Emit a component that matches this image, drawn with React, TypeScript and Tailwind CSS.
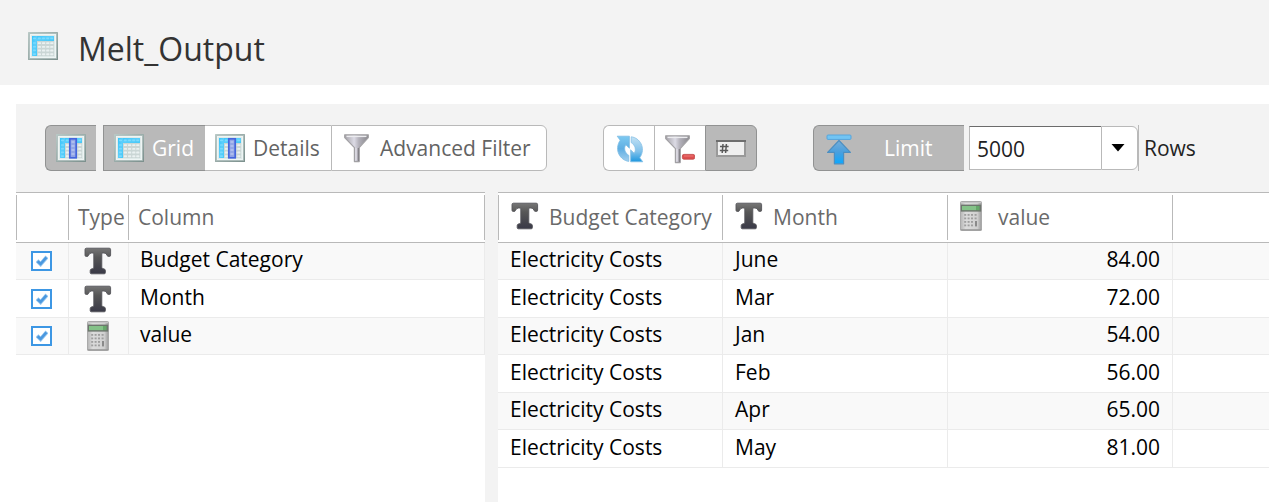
import React, { useId } from "react";

function TableIcon({ column = false }: { column?: boolean }) {
  const id = useId();
  return (
    <svg width="30" height="28" viewBox="0 0 30 28" className="shrink-0" aria-hidden="true">
      <defs>
        <linearGradient id={id + "f"} x1="0" y1="0" x2="1" y2="1">
          <stop offset="0" stopColor="#b9c9c6" />
          <stop offset="1" stopColor="#7b8f8c" />
        </linearGradient>
        <linearGradient id={id + "b"} x1="0" y1="0" x2="1" y2="1">
          <stop offset="0" stopColor="#35c3fb" />
          <stop offset="0.5" stopColor="#5ccffb" />
          <stop offset="1" stopColor="#45c8f8" />
        </linearGradient>
      </defs>
      <rect width="30" height="28" rx="0.5" fill={`url(#${id}f)`} />
      <rect x="1.2" y="1.2" width="27.6" height="25.6" fill="#b4c3c1" />
      <rect x="2" y="2" width="26" height="24" fill="#eef5f4" />
      <rect x="3" y="3" width="24" height="22" fill="#dfeae9" />
      <rect x="4" y="4" width="22" height="20" fill="#cad6d5" />
      <rect x="4" y="4" width="22" height="5" fill={`url(#${id}b)`} />
      <rect x="4" y="4" width="5" height="20" fill={`url(#${id}b)`} />
      {[10.2, 13.9, 17.6, 21.3].map((y) =>
        [9.8, 14, 18.2, 22.2].map((x) => (
          <rect key={`${x}-${y}`} x={x} y={y} width="3.2" height="1.9" rx="0.6" fill="#eaf1f1" />
        )),
      )}
      {[10.2, 13.9, 17.6, 21.3].map((y) => (
        <rect key={y} x="5" y={y} width="3" height="1.6" rx="0.6" fill="#7cdafd" />
      ))}
      {[5, 9.8, 14, 18.2, 22.2].map((x) => (
        <rect key={x} x={x} y="5.6" width="3" height="1.6" rx="0.6" fill="#7cdafd" />
      ))}
      {column && (
        <g>
          <rect x="13.8" y="4.8" width="6.4" height="19" fill="#93a6e6" stroke="#4465dd" strokeWidth="1.7" />
          {[7, 11, 15, 19].map((y) => (
            <rect key={y} x="15.5" y={y} width="3" height="2" fill="#aebdee" />
          ))}
        </g>
      )}
    </svg>
  );
}

function FunnelIcon({ minus = false }: { minus?: boolean }) {
  const id = useId();
  return (
    <svg width="30" height="30" viewBox="0 0 30 30" className="shrink-0" aria-hidden="true">
      <defs>
        <linearGradient id={id} x1="0" x2="1">
          <stop offset="0" stopColor="#a3a1a6" />
          <stop offset="0.4" stopColor="#dcdbe5" />
          <stop offset="0.6" stopColor="#b3b1ba" />
          <stop offset="1" stopColor="#89888d" />
        </linearGradient>
      </defs>
      <path
        d="M0.7 1.8H24.3V4.6L15.2 14.6V28.6H10.4V14.6L0.7 4.6Z"
        fill={`url(#${id})`}
        stroke="#a2a1a4"
        strokeWidth="1.2"
        strokeLinejoin="round"
      />
      <path d="M2.5 3.4H22.5" stroke="#ececef" strokeWidth="1.4" />
      <path d="M14.4 15V28" stroke="#858389" strokeWidth="1.4" />
      <path d="M12 15V27" stroke="#dddce4" strokeWidth="1.3" />
      {minus && (
        <g>
          <rect x="17.4" y="20.4" width="12.2" height="4.8" rx="1.4" fill="#dd4f4f" stroke="#c04444" strokeWidth="0.8" />
          <path d="M19 22H28.4" stroke="#ee7777" />
        </g>
      )}
    </svg>
  );
}

function RefreshIcon() {
  const id = useId();
  return (
    <svg width="28" height="28" viewBox="0 0 28 28" className="shrink-0" aria-hidden="true">
      <defs>
        <linearGradient id={id + "a"} x1="0" y1="0" x2="0" y2="1">
          <stop offset="0" stopColor="#7cc9f1" />
          <stop offset="0.5" stopColor="#5faee2" />
          <stop offset="1" stopColor="#a4d0ef" />
        </linearGradient>
        <linearGradient id={id + "b"} x1="0" y1="0" x2="0" y2="1">
          <stop offset="0" stopColor="#c3e2f4" />
          <stop offset="0.6" stopColor="#7fc0ea" />
          <stop offset="1" stopColor="#1d97df" />
        </linearGradient>
      </defs>
      <path
        d="M1.2 1.2H13.4V13.2L9.8 9.8C7.6 13 8.6 17.8 12.8 20.4V26.4C4.4 25.4 -2.4 15 4.2 5.2Z"
        fill={`url(#${id}a)`}
        stroke="#7dbce5"
        strokeWidth="0.8"
      />
      <path
        d="M26.8 26.8H14.6V14.8L18.2 18.2C20.4 15 19.4 10.2 15.2 7.6V1.8C23.6 2.6 30.4 13 23.8 22.8Z"
        fill={`url(#${id}b)`}
        stroke="#86c0e6"
        strokeWidth="0.8"
      />
    </svg>
  );
}

function NumberFieldIcon() {
  return (
    <svg width="30" height="17" viewBox="0 0 30 17" className="shrink-0" aria-hidden="true">
      <rect x="1" y="1" width="28" height="15" fill="#efefef" stroke="#999" strokeWidth="2" />
      <path d="M0 1H30" stroke="#6e6e6e" strokeWidth="2" />
      <path d="M7 4L6.2 13M10.4 4L9.6 13M4 6.6H12.6M3.8 10.4H12.2" stroke="#5a5a5a" strokeWidth="1.5" />
    </svg>
  );
}

function LimitIcon() {
  const id = useId();
  return (
    <svg width="26" height="31" viewBox="0 0 26 31" className="shrink-0" aria-hidden="true">
      <defs>
        <linearGradient id={id} x1="0" y1="0" x2="0" y2="1">
          <stop offset="0" stopColor="#76aed9" />
          <stop offset="0.5" stopColor="#4a9fdd" />
          <stop offset="1" stopColor="#0aa8ff" />
        </linearGradient>
      </defs>
      <rect x="1" y="1" width="24" height="4.4" rx="1" fill="#72c4f3" stroke="#56a5dc" />
      <path
        d="M13 6.5L24.4 18.4H17.6V29.8H8.4V18.4H1.6Z"
        fill={`url(#${id})`}
        stroke="#4d8fc1"
        strokeWidth="1.2"
        strokeLinejoin="round"
      />
    </svg>
  );
}

function TextTypeIcon() {
  const id = useId();
  return (
    <svg width="28" height="28" viewBox="0 0 28 28" className="shrink-0" role="img" aria-label="Text">
      <defs>
        <linearGradient id={id} x1="0" y1="0" x2="0" y2="1">
          <stop offset="0" stopColor="#767676" />
          <stop offset="0.35" stopColor="#575757" />
          <stop offset="0.75" stopColor="#44444c" />
          <stop offset="1" stopColor="#3a3a48" />
        </linearGradient>
      </defs>
      <path
        d="M2.4 1.2H25.2Q26.6 1.2 26.6 2.6V8.2Q26.6 9.4 25.4 9.4H24.4Q23.4 9.4 23.1 8.4Q22.3 6 20 6H18.6Q17.8 6 17.8 7V20.2Q17.8 21.4 18.8 21.6L20.2 22Q21.4 22.4 21.4 23.6V25.6Q21.4 26.8 20.2 26.8H7.4Q6.2 26.8 6.2 25.6V23.6Q6.2 22.4 7.4 22L8.8 21.6Q9.8 21.4 9.8 20.2V7Q9.8 6 9 6H7.6Q5.3 6 4.5 8.4Q4.2 9.4 3.2 9.4H2.2Q1 9.4 1 8.2V2.6Q1 1.2 2.4 1.2Z"
        fill={`url(#${id})`}
        stroke="#55555a"
        strokeWidth="0.9"
      />
    </svg>
  );
}

function NumberTypeIcon() {
  const id = useId();
  return (
    <svg width="22" height="30" viewBox="0 0 22 30" className="shrink-0" role="img" aria-label="Number">
      <defs>
        <linearGradient id={id} x1="0" x2="1">
          <stop offset="0" stopColor="#b5b5b5" />
          <stop offset="0.25" stopColor="#dcdcdc" />
          <stop offset="0.8" stopColor="#d0d0d0" />
          <stop offset="1" stopColor="#9b9b9b" />
        </linearGradient>
      </defs>
      <rect x="0.5" y="0.5" width="21" height="29" rx="1" fill={`url(#${id})`} stroke="#aaa" />
      <path d="M1 1.5H21" stroke="#c6c6c6" />
      <rect x="0.8" y="3.6" width="20.4" height="7" fill="#6d766d" />
      <rect x="2" y="5" width="14" height="4.2" fill="#84c288" />
      <rect x="16" y="5" width="3.6" height="4.2" fill="#65a86a" />
      {[13, 16.5, 20, 23.5].map((y) =>
        [4.2, 7.6, 11].map((x) => <rect key={`${x}-${y}`} x={x} y={y} width="2" height="1.8" fill="#9e9e9e" />),
      )}
      <rect x="14.6" y="13" width="2" height="1.8" fill="#9e9e9e" />
      <rect x="14.6" y="16.5" width="2" height="1.8" fill="#9e9e9e" />
      <rect x="15" y="20" width="2" height="5.4" fill="#8a8a8a" />
      <path d="M0.5 28.8H21.5" stroke="#999" strokeWidth="1.2" />
    </svg>
  );
}

type Kind = "text" | "number";

const columns: { name: string; kind: Kind }[] = [
  { name: "Budget Category", kind: "text" },
  { name: "Month", kind: "text" },
  { name: "value", kind: "number" },
];

const records = [
  ["Electricity Costs", "June", "84.00"],
  ["Electricity Costs", "Mar", "72.00"],
  ["Electricity Costs", "Jan", "54.00"],
  ["Electricity Costs", "Feb", "56.00"],
  ["Electricity Costs", "Apr", "65.00"],
  ["Electricity Costs", "May", "81.00"],
];

function TypeIcon({ kind }: { kind: Kind }) {
  return kind === "text" ? <TextTypeIcon /> : <NumberTypeIcon />;
}

function HeaderCell({ children, className = "" }: { children?: React.ReactNode; className?: string }) {
  return (
    <th scope="col" className="border-y border-[#b9b9b9] p-0 py-0.5 text-left font-normal text-[#6a6a6a]">
      <div className={`flex h-[45px] items-center border-r border-[#b9b9b9] whitespace-nowrap ${className}`}>
        {children}
      </div>
    </th>
  );
}

const rowClass = "h-[37px] odd:bg-[#f9f9f9] even:h-[38px]";
const cellClass = "border-r border-b border-[#ebebeb] p-0";
const textCell = `${cellClass} pb-1 leading-8 whitespace-nowrap`;
const tableClass = "w-full table-fixed border-separate border-spacing-0";
const activeButton = "flex h-[46px] items-center border border-[#919292] bg-[#b9b9b9] text-white";
const plainButton = "flex h-[46px] items-center border border-[#b9b9b9] bg-white text-[#636363]";

function ColumnPicker() {
  return (
    <section aria-label="Columns" className="w-[469px] shrink-0 bg-white">
      <table className={tableClass}>
        <colgroup>
          <col className="w-[53px]" />
          <col className="w-[60px]" />
          <col />
        </colgroup>
        <thead>
          <tr>
            <HeaderCell className="border-l" />
            <HeaderCell className="pl-[9px]">Type</HeaderCell>
            <HeaderCell className="pl-[9px]">Column</HeaderCell>
          </tr>
        </thead>
        <tbody>
          {columns.map((c) => (
            <tr key={c.name} className={rowClass}>
              <td className={cellClass}>
                <label className="ml-[15px] grid w-[21px] place-items-center">
                  <input
                    type="checkbox"
                    defaultChecked
                    aria-label={c.name}
                    className="peer h-5 w-[21px] appearance-none border-2 border-[#3d97e4] bg-white [grid-area:1/1]"
                  />
                  <svg
                    width="12"
                    height="12"
                    viewBox="0 0 12 12"
                    className="pointer-events-none invisible [grid-area:1/1] peer-checked:visible"
                    aria-hidden="true"
                  >
                    <path d="M1 5.6L4.6 9.2L11 1.8" fill="none" stroke="#9ccaf1" strokeWidth="4" />
                    <path d="M1.6 6.2L4.6 9L10.4 2.4" fill="none" stroke="#4a98df" strokeWidth="2.6" />
                  </svg>
                </label>
              </td>
              <td className={cellClass}>
                <div className="flex justify-center pr-0.5">
                  <TypeIcon kind={c.kind} />
                </div>
              </td>
              <td className={`${textCell} pl-[11px]`}>{c.name}</td>
            </tr>
          ))}
        </tbody>
      </table>
    </section>
  );
}

function DataGrid() {
  return (
    <section aria-label="Data" className="min-w-0 flex-1 bg-white">
      <table className={tableClass}>
        <colgroup>
          <col className="w-[225px]" />
          <col className="w-[225px]" />
          <col className="w-[225px]" />
          <col />
        </colgroup>
        <thead>
          <tr>
            {columns.map((c, i) => (
              <HeaderCell key={c.name} className={i === 0 ? "border-l pl-3" : "pl-3"}>
                <span className="flex w-[38px] shrink-0 pb-1">
                  <TypeIcon kind={c.kind} />
                </span>
                {c.name}
              </HeaderCell>
            ))}
            <td className="border-y border-[#b9b9b9]" />
          </tr>
        </thead>
        <tbody>
          {records.map((r) => (
            <tr key={r[1]} className={rowClass}>
              <td className={`${textCell} pl-3`}>{r[0]}</td>
              <td className={`${textCell} pl-3`}>{r[1]}</td>
              <td className={`${textCell} pr-3 text-right`}>{r[2]}</td>
              <td className="border-b border-[#ebebeb]" />
            </tr>
          ))}
        </tbody>
      </table>
    </section>
  );
}

function Toolbar() {
  return (
    <div role="toolbar" aria-label="View options" className="flex items-center px-[29px] py-[21px] whitespace-nowrap">
      <button type="button" aria-label="Toggle columns" className={`${activeButton} w-[51px] rounded-l-md border-r-0 pl-2.5`}>
        <TableIcon column />
      </button>
      <div className="ml-[7px] flex">
        <button type="button" className={`${activeButton} w-[102px] gap-2 border-r-0 pl-2.5`}>
          <TableIcon />
          <span className="pt-0.5">Grid</span>
        </button>
        <button type="button" className={`${plainButton} w-[126px] gap-2 border-x-0 pl-2.5`}>
          <TableIcon column />
          <span className="pt-0.5">Details</span>
        </button>
        <button type="button" className={`${plainButton} w-[216px] gap-1.5 rounded-r-md pl-3`}>
          <FunnelIcon />
          <span className="pt-0.5">Advanced Filter</span>
        </button>
      </div>
      <div className="ml-14 flex">
        <button type="button" aria-label="Refresh" className={`${plainButton} w-[51px] justify-center rounded-l-md border-r-0 pt-0.5 pl-0.5`}>
          <RefreshIcon />
        </button>
        <button type="button" aria-label="Clear filter" className={`${plainButton} w-[51px] justify-center border-r-0 pt-0.5`}>
          <FunnelIcon minus />
        </button>
        <button type="button" aria-label="Row numbers" className={`${activeButton} w-[52px] justify-center rounded-r-md`}>
          <NumberFieldIcon />
        </button>
      </div>
      <div className="ml-14 flex items-center">
        <button type="button" className={`${activeButton} w-[151px] gap-8 rounded-l-md border-r-0 pt-0.5 pl-3`}>
          <LimitIcon />
          Limit
        </button>
        <div className="ml-[5px] flex h-[46px] items-center border-r border-[#b9b9b9]">
          <input
            id="row-limit"
            type="text"
            defaultValue="5000"
            className="h-11 w-[132px] border border-r-0 border-[#b9b9b9] border-t-[#6b6b6b] bg-white pt-0.5 pl-[7px] text-[#222] outline-none"
          />
          <button
            type="button"
            aria-label="Choose row limit"
            className="flex h-11 w-[37px] items-center justify-center rounded-r-md border border-[#b9b9b9] bg-white"
          >
            <svg width="14" height="8" viewBox="0 0 14 8" className="mr-1" aria-hidden="true">
              <path d="M0.5 0H13.5L7 7.5Z" fill="#000" />
            </svg>
          </button>
        </div>
        <label htmlFor="row-limit" className="ml-[5px] pt-0.5 text-[#222]">
          Rows
        </label>
      </div>
    </div>
  );
}

export default function App() {
  return (
    <div className="flex min-h-screen flex-col overflow-x-hidden bg-white font-['Open_Sans','Noto_Sans',sans-serif] text-[21px] text-black">
      <header className="flex h-[85px] items-center gap-5 bg-[#f3f3f3] pt-1.5 pl-7">
        <TableIcon />
        <h1 className="pt-1.5 text-[32px] leading-10 text-[#333]">Melt_Output</h1>
      </header>
      <main className="mt-[19px] ml-4 flex flex-1 flex-col bg-[#f3f3f3]">
        <Toolbar />
        <div className="flex flex-1 gap-[13px]">
          <ColumnPicker />
          <DataGrid />
        </div>
      </main>
    </div>
  );
}
